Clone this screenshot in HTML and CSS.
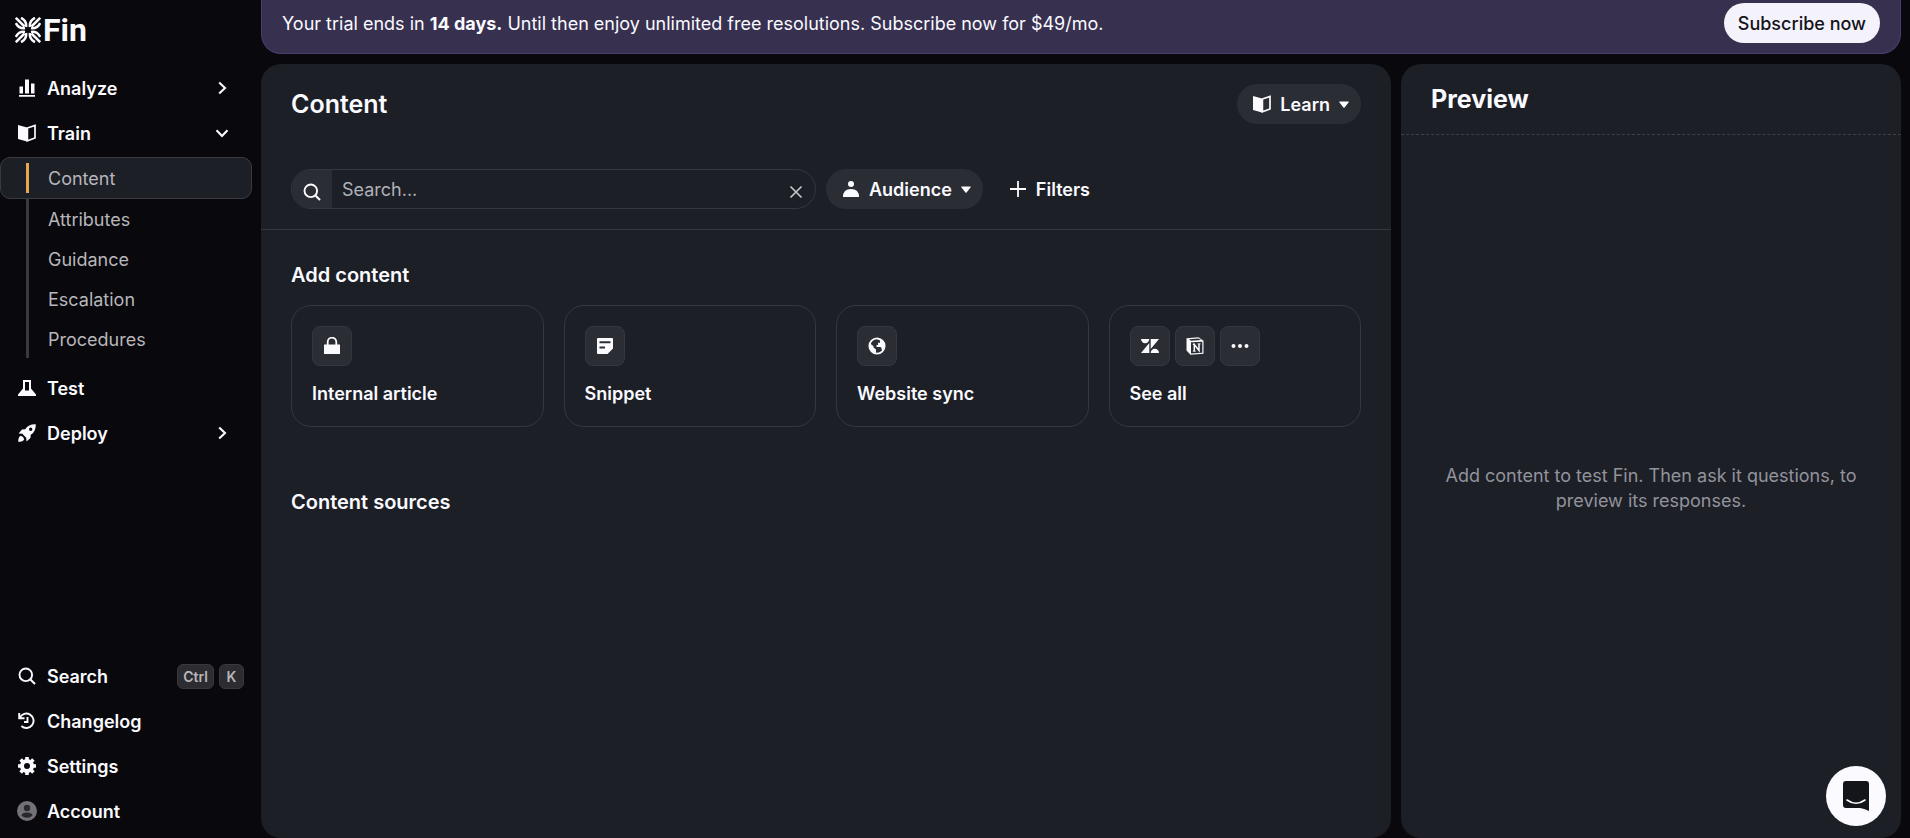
FILE: index.html
```html
<!DOCTYPE html>
<html lang="en">
<head>
    <meta charset="UTF-8">
    <meta name="viewport" content="width=device-width, initial-scale=1.0">
    <title>Fin - Content</title>
    <link rel="stylesheet" href="styles.css">
</head>
<body>
    <!-- Shared icons -->
    <svg class="sprite" width="0" height="0" aria-hidden="true">
        <symbol id="icon-book" viewBox="0 0 18 18">
            <path d="M0 1 L9 3.6 V17.4 L0 15 Z" fill="currentColor"/>
            <path d="M9.4 4 L17 1.4 V14 L9.4 16.8 Z" fill="none" stroke="currentColor" stroke-width="1.7"/>
        </symbol>
        <symbol id="icon-search" viewBox="0 0 18 18">
            <circle cx="7.8" cy="7.8" r="6.3" fill="none" stroke="currentColor" stroke-width="1.9"/>
            <path d="M12.4 12.4 L17 17" stroke="currentColor" stroke-width="2.1"/>
        </symbol>
        <symbol id="icon-chevron" viewBox="0 0 14 14">
            <path d="M4.2 1.5 L10 7 L4.2 12.5" fill="none" stroke="currentColor" stroke-width="2.1"/>
        </symbol>
        <symbol id="icon-caret" viewBox="0 0 10 7">
            <path d="M0.4 0.4 H9.6 Q10 1 9.5 1.6 L5.6 6.4 Q5 7 4.4 6.4 L0.5 1.6 Q0 1 0.4 0.4 Z" fill="currentColor"/>
        </symbol>
    </svg>

    <div class="app">
        <aside class="sidebar">
            <a href="#" class="logo">
                <svg width="26" height="26" viewBox="0 0 26 26" fill="none" stroke="currentColor" stroke-width="2.5">
                    <g id="burst">
                        <path d="M0.8 0.8 L9.5 9.5"/>
                        <path d="M6 0.8 Q12 4 11 10"/>
                        <path d="M0.8 6 Q4 12 10 11"/>
                    </g>
                    <use href="#burst" transform="matrix(-1 0 0 1 26 0)"/>
                    <use href="#burst" transform="matrix(1 0 0 -1 0 26)"/>
                    <use href="#burst" transform="matrix(-1 0 0 -1 26 26)"/>
                </svg>
                <span>Fin</span>
            </a>
            <nav class="nav">
                <a href="#" class="nav-item">
                    <svg class="icon" viewBox="0 0 18 18" fill="currentColor"><path d="M1.5 7.5 H5 V14.5 H1.5 Z M7 0.5 H11 V14.5 H7 Z M13 4.5 H16.5 V14.5 H13 Z M1 16 H17 V17.7 H1 Z"/></svg>
                    <span>Analyze</span>
                    <svg class="chevron"><use href="#icon-chevron"/></svg>
                </a>
                <a href="#" class="nav-item">
                    <svg class="icon"><use href="#icon-book"/></svg>
                    <span>Train</span>
                    <svg class="chevron open"><use href="#icon-chevron"/></svg>
                </a>
                <div class="subnav">
                    <a href="#" class="active">Content</a>
                    <a href="#">Attributes</a>
                    <a href="#">Guidance</a>
                    <a href="#">Escalation</a>
                    <a href="#">Procedures</a>
                </div>
                <a href="#" class="nav-item">
                    <svg class="icon" viewBox="0 0 18 18"><path d="M5 1 H13 V9.500 L18 15.500 V17 H0 V15.500 L5 9.500 Z M7 3 V11.500 H11 V3 Z" fill="currentColor" fill-rule="evenodd"/></svg>
                    <span>Test</span>
                </a>
                <a href="#" class="nav-item">
                    <svg class="icon" viewBox="0 0 18 18" fill="currentColor"><path fill-rule="evenodd" d="M17.8 0.2 C13 0 9.5 1.8 7.2 5.2 L4 5.6 L0.6 9.4 L4.3 9.8 L8.2 13.7 L8.6 17.4 L12.4 14 L12.8 10.8 C16.2 8.5 18 5 17.8 0.2 Z M12.7 3.6 a1.7 1.7 0 1 1 0 3.4 a1.7 1.7 0 1 1 0 -3.4 Z"/><path d="M2.8 11.8 Q0.2 13 0.2 17.8 Q5 17.8 6.2 15.2 Q5.6 12.4 2.8 11.8 Z"/></svg>
                    <span>Deploy</span>
                    <svg class="chevron"><use href="#icon-chevron"/></svg>
                </a>
            </nav>
            <nav class="nav nav-bottom">
                <a href="#" class="nav-item">
                    <svg class="icon"><use href="#icon-search"/></svg>
                    <span>Search</span>
                    <span class="keys"><kbd>Ctrl</kbd><kbd>K</kbd></span>
                </a>
                <a href="#" class="nav-item">
                    <svg class="icon" viewBox="0 0 18 18" fill="none" stroke="currentColor" stroke-width="1.9"><path d="M1.2 1 V6.3 H6.5 M1.8 5.8 A7.2 7.2 0 1 1 3.4 14"/><path d="M9.5 5 V10 H6"/></svg>
                    <span>Changelog</span>
                </a>
                <a href="#" class="nav-item">
                    <svg class="icon" viewBox="0 0 18 18"><circle cx="9" cy="9" r="5" fill="none" stroke="currentColor" stroke-width="4"/><path d="M9 0 V3 M9 15 V18 M0 9 H3 M15 9 H18 M2.6 2.6 L4.8 4.8 M13.2 13.2 L15.4 15.4 M2.6 15.4 L4.8 13.2 M13.2 4.8 L15.4 2.6" stroke="currentColor" stroke-width="3.6"/></svg>
                    <span>Settings</span>
                </a>
                <a href="#" class="nav-item">
                    <svg class="icon avatar" viewBox="0 0 20 20"><circle cx="10" cy="10" r="10" fill="#737276"/><circle cx="10" cy="7" r="3.2" fill="#29282c"/><path d="M4.5 14.5 Q5 11.5 10 11.5 T15.5 14.5 Q13.5 16.8 10 16.8 T4.5 14.5 Z" fill="#29282c"/></svg>
                    <span>Account</span>
                </a>
            </nav>
        </aside>

        <div class="workspace">
            <div class="banner">
                <p>Your trial ends in <strong>14 days.</strong> Until then enjoy unlimited free resolutions. Subscribe now for $49/mo.</p>
                <button class="subscribe">Subscribe now</button>
            </div>
            <div class="panels">
                <main class="panel content">
                    <header class="content-header">
                        <h1>Content</h1>
                        <button class="pill">
                            <svg class="icon"><use href="#icon-book"/></svg>
                            Learn
                            <svg class="caret"><use href="#icon-caret"/></svg>
                        </button>
                    </header>
                    <div class="toolbar">
                        <div class="search">
                            <label for="search" aria-label="Search"><svg class="icon"><use href="#icon-search"/></svg></label>
                            <input type="text" id="search" placeholder="Search...">
                            <button class="clear" aria-label="Clear"><svg viewBox="0 0 14 14"><path d="M1.5 1.5 L12.5 12.5 M12.5 1.5 L1.5 12.5" stroke="currentColor" stroke-width="1.7"/></svg></button>
                        </div>
                        <button class="pill">
                            <svg class="icon" viewBox="0 0 18 18" fill="currentColor"><circle cx="9" cy="4" r="3"/><path d="M1 17 Q1 9 9 9 T17 17 Z"/></svg>
                            Audience
                            <svg class="caret"><use href="#icon-caret"/></svg>
                        </button>
                        <button class="pill plain">
                            <svg class="icon" viewBox="0 0 18 18"><path d="M9 1 V17 M1 9 H17" stroke="currentColor" stroke-width="1.8"/></svg>
                            Filters
                        </button>
                    </div>
                    <section class="sources">
                        <h2>Add content</h2>
                        <div class="cards">
                            <button class="card">
                                <span class="tiles">
                                    <span class="tile"><svg viewBox="0 0 18 18"><path d="M1 7.5 H17 V17 H1 Z" fill="currentColor"/><path d="M4.7 8 V5 A4.3 4.3 0 0 1 13.3 5 V8" fill="none" stroke="currentColor" stroke-width="1.8"/></svg></span>
                                </span>
                                Internal article
                            </button>
                            <button class="card">
                                <span class="tiles">
                                    <span class="tile"><svg viewBox="0 0 18 18"><path fill="currentColor" fill-rule="evenodd" d="M2 1 H16 Q17 1 17 2 V11.5 L11.5 17 H2 Q1 17 1 16 V2 Q1 1 2 1 Z M3.5 4.3 V6.3 H14.5 V4.3 Z M3.5 9.5 V11.5 H9 V9.5 Z"/></svg></span>
                                </span>
                                Snippet
                            </button>
                            <button class="card">
                                <span class="tiles">
                                    <span class="tile"><svg viewBox="0 0 18 18"><circle cx="9" cy="9" r="7.6" fill="none" stroke="currentColor" stroke-width="1.9"/><path d="M1.5 6 L5.5 9.3 V10.5 L8 12.5 V16.5 L4 15 L1 10 Z M9 2 H12 L14.5 4 L16.5 8.5 L15 13.5 L13.5 12.5 V11 L12.5 10 H8.5 V8 H10 V5.8 H12 V3.5 Z" fill="currentColor"/></svg></span>
                                </span>
                                Website sync
                            </button>
                            <button class="card">
                                <span class="tiles">
                                    <span class="tile"><svg viewBox="0 0 18 18" fill="currentColor"><path d="M0 2 H8.3 A4.15 4.15 0 0 1 0 2 Z M8.3 6 V16 H0 Z M9.7 2 H18 L9.7 12 Z M9.7 16 A4.15 4.15 0 0 1 18 16 Z"/></svg></span>
                                    <span class="tile"><svg viewBox="0 0 18 18"><path d="M0.5 1.2 L12.5 0.3 L17.5 3.8 V16.8 L4.500 17.8 L0.5 13.5 Z M3 2.300 L5 3.700 L15 3 L12.500 1.500 Z M5 5.300 V16.400 L16.300 15.700 V4.700 Z" fill="currentColor" fill-rule="evenodd"/><path d="M8.300 14 V7.500 L13 13.500 V7" stroke="currentColor" stroke-width="1.500" fill="none"/><path d="M6.800 14.200 H9.700 M6.800 7.400 H9 M11.700 6.900 H14.500" stroke="currentColor"/></svg></span>
                                    <span class="tile"><svg viewBox="0 0 18 18" fill="currentColor"><circle cx="2.5" cy="9" r="2"/><circle cx="9" cy="9" r="2"/><circle cx="15.5" cy="9" r="2"/></svg></span>
                                </span>
                                See all
                            </button>
                        </div>
                        <h2>Content sources</h2>
                    </section>
                </main>
                <section class="panel preview">
                    <h2>Preview</h2>
                    <p>Add content to test Fin. Then ask it questions, to preview its responses.</p>
                </section>
            </div>
        </div>
    </div>

    <button class="chat" aria-label="Open chat">
        <svg viewBox="0 0 26 30"><path d="M3 0 H23 Q26 0 26 3 V30 Q21 27.5 17 27 H3 Q0 27 0 24 V3 Q0 0 3 0 Z" fill="#14151b"/><path d="M4 19 Q13 25.5 22 19" fill="none" stroke="#fafaff" stroke-width="1.6" stroke-linecap="round"/></svg>
    </button>
</body>
</html>
```
FILE: styles.css
```css
* {
    box-sizing: border-box;
}
body {
    margin: 0;
    background: #09080c;
    color: #fafaff;
    font-family: Inter, "Liberation Sans", sans-serif;
    font-size: 18px;
    line-height: 25px;
}
h1, h2, p {
    margin: 0;
}
a {
    color: inherit;
    text-decoration: none;
}
button {
    border: none;
    background: none;
    color: inherit;
    font: inherit;
    cursor: pointer;
}
.sprite {
    display: none;
}
.icon {
    width: 18px;
    height: 18px;
    flex: none;
}
.app {
    display: flex;
    height: 100vh;
}

/* Sidebar */
.sidebar {
    display: flex;
    flex-direction: column;
    width: 261px;
    flex: none;
    padding: 12px 9px 7px 0;
}
.logo {
    display: flex;
    align-items: center;
    gap: 2px;
    height: 36px;
    margin: 0 0 20px 15px;
    font-family: Roboto, sans-serif;
    font-size: 32px;
    font-weight: 700;
    line-height: 36px;
}
.nav {
    display: flex;
    flex-direction: column;
    gap: 5px;
}
.nav-bottom {
    margin-top: auto;
}
.nav-item {
    display: flex;
    align-items: center;
    gap: 11px;
    height: 40px;
    padding: 0 8px 0 18px;
    font-weight: 600;
}
.avatar {
    width: 20px;
    height: 20px;
    margin: 0 -1px;
}
.chevron {
    width: 14px;
    height: 14px;
    margin: 0 15px 0 auto;
}
.chevron.open {
    transform: rotate(90deg);
}
.subnav {
    display: flex;
    flex-direction: column;
    padding-bottom: 4px;
    margin-top: -1px;
    background: linear-gradient(#3a393e, #3a393e) 26px 0 / 3px 201px no-repeat;
    color: #b7b6bb;
}
.subnav a {
    display: flex;
    align-items: center;
    height: 40px;
    padding-left: 48px;
}
.subnav .active {
    height: 42px;
    padding-left: 47px;
    border: 1px solid #3a3a40;
    border-radius: 10px;
    background: linear-gradient(#e5a750, #e5a750) 25px center / 3px 30px no-repeat, #1d1f27;
}
.keys {
    display: flex;
    gap: 5px;
    margin-left: auto;
}
kbd {
    min-width: 25px;
    padding: 0 5px;
    border: 1px solid #39383d;
    border-radius: 6px;
    background: #2d2c31;
    color: #b7b6bb;
    font-family: inherit;
    font-size: 14px;
    line-height: 23px;
    text-align: center;
}

/* Trial banner */
.workspace {
    display: flex;
    flex: 1;
    flex-direction: column;
    min-width: 0;
    padding-right: 9px;
}
.banner {
    display: flex;
    align-items: center;
    justify-content: space-between;
    height: 54px;
    padding: 0 20px 7px;
    border: 1px solid #4a3f70;
    border-top: none;
    border-radius: 0 0 20px 20px;
    background: #37304f;
}
.subscribe {
    height: 40px;
    padding: 0 14px;
    border-radius: 20px;
    background: #f4f2fa;
    color: #14131a;
    font-weight: 500;
}

/* Panels */
.panels {
    display: flex;
    flex: 1;
    gap: 10px;
    min-height: 0;
    padding-top: 10px;
}
.panel {
    border-radius: 20px;
    background: #1d1f27;
}
.content {
    flex: 1;
    min-width: 0;
}
.content-header {
    display: flex;
    align-items: center;
    justify-content: space-between;
    padding: 20px 30px 0;
}
h1, .preview h2 {
    font-size: 25px;
    font-weight: 600;
    line-height: 30px;
}
.pill {
    display: flex;
    align-items: center;
    gap: 9px;
    height: 40px;
    padding: 0 12px 0 16px;
    border-radius: 20px;
    background: #2b2d35;
    font-weight: 600;
}
.pill.plain {
    background: none;
}
.caret {
    width: 10px;
    height: 7px;
}
.toolbar {
    display: flex;
    gap: 10px;
    padding: 45px 30px 20px;
    border-bottom: 1px solid #35373f;
}
.search {
    display: flex;
    align-items: center;
    width: 525px;
    height: 40px;
    border: 1px solid #35373f;
    border-radius: 20px;
    overflow: hidden;
}
.search label {
    display: flex;
    align-items: center;
    justify-content: center;
    align-self: stretch;
    width: 40px;
    padding-top: 5px;
    background: #2b2d35;
}
.search input {
    flex: 1;
    min-width: 0;
    padding: 0 10px;
    border: none;
    outline: none;
    background: none;
    color: inherit;
    font: inherit;
}
.search input::placeholder {
    color: #b0b1b8;
}
.clear {
    display: flex;
    padding: 5px 12px 0;
    color: #c5c6cc;
}
.clear svg {
    width: 14px;
    height: 14px;
}
.sources {
    padding: 32px 30px;
}
.sources h2 {
    font-size: 20px;
    font-weight: 600;
    line-height: 26px;
}
.cards {
    display: grid;
    grid-template-columns: repeat(4, 1fr);
    gap: 20px;
    margin: 17px 0 62px;
}
.card {
    display: flex;
    flex-direction: column;
    gap: 15px;
    padding: 20px;
    border: 1px solid #35373f;
    border-radius: 20px;
    font-weight: 600;
    text-align: left;
}
.tiles {
    display: flex;
    gap: 5px;
}
.tile {
    display: flex;
    align-items: center;
    justify-content: center;
    width: 40px;
    height: 40px;
    border: 1px solid #35373f;
    border-radius: 8px;
    background: #2b2d35;
}
.tile svg {
    width: 18px;
    height: 18px;
}

/* Preview */
.preview {
    display: flex;
    flex-direction: column;
    width: 500px;
    flex: none;
}
.preview h2 {
    padding: 20px 30px;
    border-bottom: 1px dashed #3d3f48;
    font-weight: 700;
}
.preview p {
    margin: auto;
    padding: 2px 40px 0;
    color: #92939c;
    text-align: center;
}
.chat {
    position: fixed;
    right: 24px;
    bottom: 12px;
    display: flex;
    align-items: center;
    justify-content: center;
    width: 60px;
    height: 60px;
    border-radius: 50%;
    background: #fafaff;
}
.chat svg {
    width: 26px;
    height: 30px;
    flex: none;
}
```
